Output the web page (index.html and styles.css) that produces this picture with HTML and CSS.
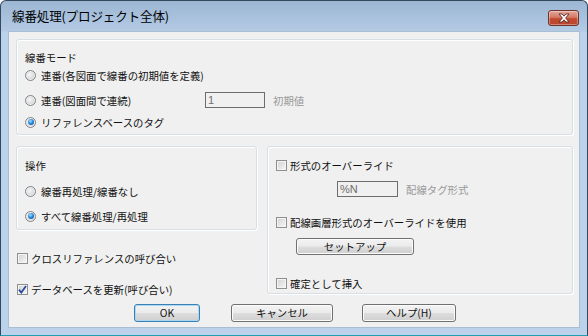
FILE: index.html
```html
<!DOCTYPE html>
<html lang="ja">
<head>
    <meta charset="UTF-8">
    <title>線番処理(プロジェクト全体)</title>
    <link rel="stylesheet" href="styles.css">
</head>
<body>
    <div class="window">
        <div class="titlebar">
            <span class="title">線番処理(プロジェクト全体)</span>
            <button class="close-btn" aria-label="閉じる">
                <svg width="14" height="10" viewBox="0 0 14 10">
                    <path d="M2 1 L5 1 L7 3.2 L9 1 L12 1 L8.6 5 L12 9 L9 9 L7 6.8 L5 9 L2 9 L5.4 5 Z" fill="#fff" stroke="#5a2a22" stroke-width="0.9" stroke-linejoin="round"/>
                </svg>
            </button>
        </div>

        <div class="client">
            <div class="group group-mode">
                <div class="row">線番モード</div>
                <div class="row">
                    <span class="radio"></span>連番(各図面で線番の初期値を定義)
                </div>
                <div class="row gap-7">
                    <span class="radio-label"><span class="radio"></span>連番(図面間で連続)</span>
                    <span class="field">1</span>
                    <span class="hint">初期値</span>
                </div>
                <div class="row gap-4">
                    <span class="radio checked"></span>リファレンスベースのタグ
                </div>
            </div>

            <div class="middle">
                <div class="left-col">
                    <div class="group group-op">
                        <div class="row">操作</div>
                        <div class="row gap-8">
                            <span class="radio"></span>線番再処理/線番なし
                        </div>
                        <div class="row gap-7">
                            <span class="radio checked"></span>すべて線番処理/再処理
                        </div>
                    </div>
                    <div class="row loose gap-19">
                        <span class="check"></span>クロスリファレンスの呼び合い
                    </div>
                    <div class="row loose gap-13">
                        <span class="check checked">
                            <svg width="9" height="9" viewBox="0 0 9 9">
                                <path d="M1 4.6 L3.3 7.6 L8 1" fill="none" stroke="#2a4d9c" stroke-width="1.8"/>
                            </svg>
                        </span>データベースを更新(呼び合い)
                    </div>
                </div>

                <div class="group group-format">
                    <div class="row">
                        <span class="check"></span>形式のオーバーライド
                    </div>
                    <div class="row field-row gap-7">
                        <span class="field wide">%N</span>
                        <span class="hint">配線タグ形式</span>
                    </div>
                    <div class="row gap-16">
                        <span class="check"></span>配線画層形式のオーバーライドを使用
                    </div>
                    <div class="row button-row gap-7">
                        <button class="btn setup">セットアップ</button>
                    </div>
                    <div class="row gap-19">
                        <span class="check"></span>確定として挿入
                    </div>
                </div>
            </div>

            <div class="buttons">
                <button class="btn default ok">OK</button>
                <button class="btn cancel">キャンセル</button>
                <button class="btn help">ヘルプ(H)</button>
            </div>
        </div>
    </div>
</body>
</html>
```

FILE: styles.css
```css
* {
    margin: 0;
    padding: 0;
    box-sizing: border-box;
}

body {
    font-family: "Noto Sans CJK JP", "Noto Sans", sans-serif;
    font-size: 10.4px;
    color: #111;
    background: #fff;
}

.window {
    width: 588px;
    height: 336px;
    border: 1px solid #34495e;
    border-bottom-color: #1f9fb5;
    border-radius: 6px 6px 0 0;
    background: linear-gradient(to bottom, #9cb6d3 0px, #b3cae4 30px, #bcd2ea 31px, #bcd2ea 100%);
    display: flex;
    flex-direction: column;
}

.titlebar {
    height: 30px;
    display: flex;
    align-items: center;
    justify-content: space-between;
    padding: 0 8px 2px 11px;
}

.title {
    font-size: 12.6px;
    color: #000;
    letter-spacing: -0.2px;
}

.close-btn {
    width: 31px;
    height: 16px;
    margin-top: 5px;
    border: 1px solid #6e3328;
    border-radius: 3px;
    background: linear-gradient(to bottom, #e3a79b 0%, #d57a66 45%, #c34a30 55%, #b8452e 100%);
    box-shadow: inset 0 0 0 1px rgba(255, 255, 255, 0.35);
    display: flex;
    align-items: center;
    justify-content: center;
}

.client {
    height: 297px;
    margin: 0 7px;
    background: #f0f0f0;
    border: 1px solid #a9bdd3;
    padding: 7px 6px 0 7px;
}

.group {
    border: 1px solid #d5dfe5;
    border-radius: 3px;
    box-shadow: inset 1px 1px 0 #fff, 1px 1px 0 #fff;
    padding-left: 8px;
}

.group-mode {
    height: 96px;
    padding-top: 8px;
}

.middle {
    display: flex;
    gap: 10px;
    margin-top: 11px;
}

.left-col {
    width: 241px;
    display: flex;
    flex-direction: column;
}

.group-op {
    height: 84px;
    padding-top: 9px;
}

.group-format {
    width: 306px;
    height: 148px;
    padding-top: 9px;
}

.row {
    height: 18px;
    display: flex;
    align-items: center;
    white-space: nowrap;
}

.row.loose {
    padding-left: 1px;
}

.gap-4 { margin-top: 4px; }
.gap-7 { margin-top: 7px; }
.gap-8 { margin-top: 8px; }
.gap-13 { margin-top: 13px; }
.gap-16 { margin-top: 16px; }
.gap-19 { margin-top: 19px; }

.radio-label {
    width: 180px;
    display: flex;
    align-items: center;
}

.radio {
    width: 11px;
    height: 11px;
    border-radius: 50%;
    border: 1px solid #7f8387;
    background: radial-gradient(circle at 40% 40%, #f6f6f6 0%, #dcdcdc 55%, #c2c2c2 100%);
    box-shadow: inset 0 0 0 1px #efefef;
    margin-right: 5px;
    flex: none;
    position: relative;
}

.radio.checked::after {
    content: "";
    position: absolute;
    left: 1.5px;
    top: 1.5px;
    width: 6px;
    height: 6px;
    border-radius: 50%;
    background: radial-gradient(circle at 40% 35%, #a8e2ff 0%, #2b8ee0 45%, #0b3f8a 100%);
}

.check {
    width: 11px;
    height: 11px;
    border: 1px solid #8e8f8f;
    background: linear-gradient(135deg, #d2d2d2 0%, #e8e8e8 60%, #f8f8f8 100%);
    box-shadow: inset 0 0 0 1px #f4f4f4;
    margin-right: 3px;
    flex: none;
    display: flex;
    align-items: center;
    justify-content: center;
}

.field {
    width: 60px;
    height: 16px;
    border: 1px solid #6d6d6d;
    background: #f0f0f0;
    color: #6d6d6d;
    font-family: "Liberation Sans", sans-serif;
    font-size: 11px;
    line-height: 14px;
    padding-left: 2px;
}

.field.wide {
    width: 61px;
    margin-left: 61px;
}

.field-row {
    height: 16px;
}

.hint {
    color: #9a9a9a;
    margin-left: 8px;
}

.button-row {
    height: 17px;
}

.btn {
    height: 17px;
    border: 1px solid #707070;
    border-radius: 3px;
    background: linear-gradient(to bottom, #f3f3f3 0%, #ebebeb 48%, #dddddd 52%, #cfcfcf 100%);
    box-shadow: inset 0 0 0 1px #fcfcfc;
    font-family: "Noto Sans CJK JP", "Noto Sans", sans-serif;
    font-size: 10.4px;
    color: #111;
    line-height: 14px;
}

.setup {
    width: 118px;
    margin-left: 20px;
}

.buttons {
    display: flex;
    margin-top: 6px;
    padding-left: 118px;
}

.btn.default {
    border-color: #3c7fb1;
    box-shadow: inset 0 0 0 1px #a7d9f5;
}

.ok {
    width: 66px;
    height: 18px;
}

.cancel {
    width: 102px;
    height: 18px;
    margin-left: 31px;
}

.help {
    width: 94px;
    height: 18px;
    margin-left: 29px;
}
```
